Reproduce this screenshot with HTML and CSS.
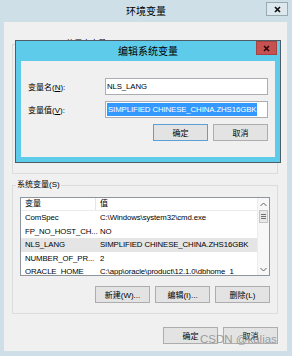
FILE: index.html
```html
<!DOCTYPE html>
<html lang="zh-CN">
<head>
    <meta charset="UTF-8">
    <meta name="viewport" content="width=device-width, initial-scale=1.0">
    <title>环境变量</title>
    <link rel="stylesheet" href="styles.css">
</head>
<body>

<div class="env-window">
    <div class="env-title">
        <span class="title-text">环境变量</span>
        <div class="close-btn">
            <svg width="7" height="7" viewBox="0 0 7 7"><path d="M1 1L6 6M6 1L1 6" stroke="#111" stroke-width="1.7"/></svg>
        </div>
    </div>

    <div class="env-client">
        <fieldset class="group">
            <legend>Administrator 的用户变量(U)</legend>
            <div class="group-body user-body"></div>
        </fieldset>

        <fieldset class="group sys-group">
            <legend>系统变量(S)</legend>
            <div class="group-body sys-body">
                <div class="list">
                    <div class="list-body">
                        <div class="list-head">
                            <div class="col-name">变量</div>
                            <div class="col-val">值</div>
                        </div>
                        <div class="list-row">
                            <div class="col-name">ComSpec</div>
                            <div class="col-val">C:\Windows\system32\cmd.exe</div>
                        </div>
                        <div class="list-row">
                            <div class="col-name">FP_NO_HOST_CH...</div>
                            <div class="col-val">NO</div>
                        </div>
                        <div class="list-row selected">
                            <div class="col-name">NLS_LANG</div>
                            <div class="col-val">SIMPLIFIED CHINESE_CHINA.ZHS16GBK</div>
                        </div>
                        <div class="list-row">
                            <div class="col-name">NUMBER_OF_PR...</div>
                            <div class="col-val">2</div>
                        </div>
                        <div class="list-row">
                            <div class="col-name">ORACLE_HOME</div>
                            <div class="col-val">C:\app\oracle\product\12.1.0\dbhome_1</div>
                        </div>
                    </div>
                    <div class="scrollbar">
                        <div class="sb-arrow">
                            <svg width="7" height="5" viewBox="0 0 7 5"><path d="M0.5 4L3.5 1L6.5 4" fill="none" stroke="#606060"/></svg>
                        </div>
                        <div class="sb-thumb">
                            <svg width="5" height="5" viewBox="0 0 5 5"><path d="M0 0.5H5M0 2.5H5M0 4.5H5" stroke="#707070"/></svg>
                        </div>
                        <div class="sb-track"></div>
                        <div class="sb-arrow">
                            <svg width="7" height="5" viewBox="0 0 7 5"><path d="M0.5 1L3.5 4L6.5 1" fill="none" stroke="#606060"/></svg>
                        </div>
                    </div>
                </div>
                <div class="btn-row list-btns">
                    <div class="btn">新建(W)...</div>
                    <div class="btn">编辑(I)...</div>
                    <div class="btn">删除(L)</div>
                </div>
            </div>
        </fieldset>

        <div class="btn-row main-btns">
            <div class="btn">确定</div>
            <div class="btn">取消</div>
        </div>
    </div>

    <!-- 编辑对话框盖在主窗口上面 -->
    <div class="edit-dialog">
        <div class="dlg-title">
            <span class="title-text">编辑系统变量</span>
            <div class="dlg-close">
                <svg width="7" height="7" viewBox="0 0 7 7"><path d="M1 1L6 6M6 1L1 6" stroke="#2a0a0a" stroke-width="1.7"/></svg>
            </div>
        </div>
        <div class="dlg-client">
            <div class="form-row">
                <label>变量名(<u>N</u>):</label>
                <div class="input">NLS_LANG</div>
            </div>
            <div class="form-row">
                <label>变量值(<u>V</u>):</label>
                <div class="input"><span class="sel">SIMPLIFIED CHINESE_CHINA.ZHS16GBK</span></div>
            </div>
            <div class="btn-row dlg-btns">
                <div class="btn default">确定</div>
                <div class="btn">取消</div>
            </div>
        </div>
    </div>

    <div class="watermark">CSDN @kalias</div>
</div>

</body>
</html>
```

FILE: styles.css
```css
body {
    margin: 0;
    font-family: "Liberation Sans", "Noto Sans CJK SC", sans-serif;
    font-size: 8px;
    color: #000;
}
.env-window {
    position: relative;
    width: 292px;
    height: 356px;
    background-color: #cfdfe7;
    display: flex;
    flex-direction: column;
    overflow: hidden;
}
.env-title {
    height: 22px;
    flex: none;
    display: grid;
    grid-template-columns: 1fr auto 1fr;
    align-items: center;
}
.title-text {
    grid-column: 2;
    font-size: 10px;
    line-height: 14px;
    padding-top: 1px;
}
.close-btn {
    grid-column: 3;
    justify-self: end;
    align-self: start;
    margin: 2px 4px 0 0;
    width: 22px;
    height: 14px;
    box-sizing: border-box;
    border: 1px solid #98a9b1;
    background-color: #dce8ed;
    display: flex;
    align-items: center;
    justify-content: center;
}
.env-client {
    flex: 1;
    margin: 0 5px 5px 4px;
    padding: 15px 9px 0 8px;
    background-color: #f0f0f0;
}
.group {
    margin: 0;
    padding: 0;
    min-width: 0;
    border: 1px solid #dcdcdc;
}
.group legend {
    margin-left: 3px;
    padding: 0 1px;
    line-height: 14px;
}
.user-body {
    height: 122px;
}
.sys-group {
    margin-top: 4px;
}
.sys-body {
    padding: 5px 7px 10px;
}

/* 列表 */
.list {
    width: 250px;
    height: 79px;
    box-sizing: border-box;
    border: 1px solid #8e959c;
    background-color: #fff;
    display: flex;
    overflow: hidden;
}
.list-body {
    flex: 1;
    overflow: hidden;
}
.list-head {
    display: flex;
    height: 13px;
    line-height: 12px;
    border-bottom: 1px solid #ececec;
    box-sizing: border-box;
}
.list-head .col-name {
    border-right: 1px solid #e5e5e5;
}
.list-row {
    display: flex;
    height: 13.5px;
    line-height: 13.5px;
    white-space: nowrap;
    font-size: 7.8px;
    letter-spacing: -0.1px;
}
.list-row.selected {
    background-color: #e5e5e5;
}
.col-name {
    width: 75px;
    flex: none;
    padding-left: 4px;
    box-sizing: border-box;
}
.col-val {
    padding-left: 4px;
}
.scrollbar {
    width: 11px;
    flex: none;
    border-left: 1px solid #ececec;
    background-color: #f7f7f7;
    display: flex;
    flex-direction: column;
}
.sb-arrow {
    height: 12px;
    display: flex;
    align-items: center;
    justify-content: center;
}
.sb-thumb {
    height: 11px;
    margin: 0 1px;
    border: 1px solid #c4c4c4;
    background-color: #e8e8e8;
    display: flex;
    align-items: center;
    justify-content: center;
}
.sb-track {
    flex: 1;
}

/* 按钮 */
.btn-row {
    display: flex;
    justify-content: flex-end;
    gap: 5px;
}
.btn {
    width: 55px;
    height: 17px;
    box-sizing: border-box;
    border: 1px solid #adadad;
    background-color: #e3e3e3;
    display: flex;
    align-items: center;
    justify-content: center;
}
.btn.default {
    border-color: #5a9fd6;
}
.list-btns {
    margin-top: 10px;
}
.main-btns {
    margin-top: 13px;
}

/* 编辑系统变量 对话框 */
.edit-dialog {
    position: absolute;
    left: 15px;
    top: 40px;
    width: 266px;
    height: 123px;
    box-sizing: border-box;
    border: 1px solid #4d5d66;
    background-color: #5fcbea;
    display: flex;
    flex-direction: column;
}
.dlg-title {
    height: 20px;
    flex: none;
    display: grid;
    grid-template-columns: 1fr auto 1fr;
    align-items: center;
}
.dlg-close {
    grid-column: 3;
    justify-self: end;
    align-self: start;
    margin-right: 3px;
    width: 21px;
    height: 14px;
    box-sizing: border-box;
    border: 1px solid #a54343;
    background-color: #c75050;
    display: flex;
    align-items: center;
    justify-content: center;
}
.dlg-client {
    flex: 1;
    margin: 0 5px 5px;
    padding: 17px 7px 0;
    background-color: #f0f0f0;
}
.form-row {
    display: grid;
    grid-template-columns: 77px 1fr;
    align-items: center;
    margin-bottom: 6px;
}
.form-row label u {
    text-decoration: underline;
}
.input {
    height: 17px;
    box-sizing: border-box;
    border: 1px solid #abadb3;
    background-color: #fff;
    padding: 1px 1px;
    line-height: 13px;
    font-size: 7.8px;
    letter-spacing: -0.1px;
    white-space: nowrap;
    overflow: hidden;
}
.input .sel {
    display: inline-block;
    background-color: #3399ff;
    color: #fff;
    padding: 0 1px;
}
.dlg-btns {
    margin-top: 6px;
}

.watermark {
    position: absolute;
    left: 200px;
    top: 332px;
    font-size: 11.5px;
    line-height: 14px;
    color: rgba(140, 140, 140, 0.85);
    pointer-events: none;
}
```
